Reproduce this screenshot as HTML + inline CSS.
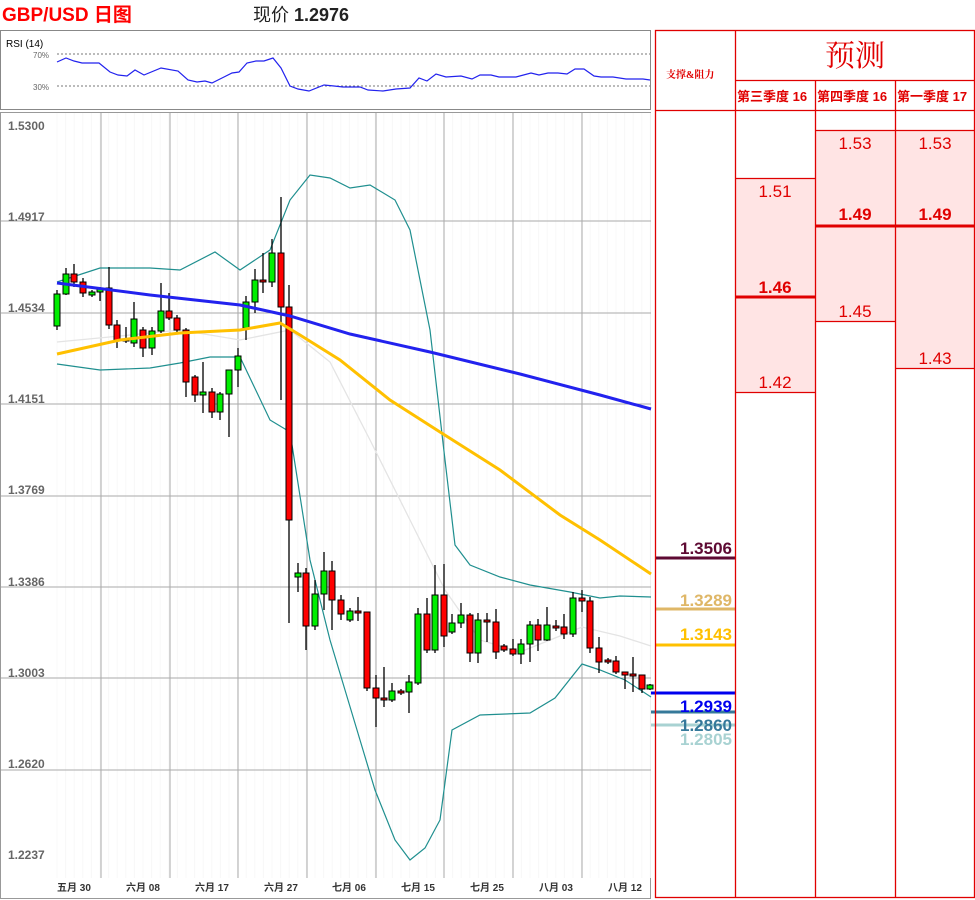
<!DOCTYPE html>
<html><head><meta charset="utf-8"><style>
body{margin:0;width:975px;height:900px;background:#fff;overflow:hidden;font-family:"Liberation Sans","Noto Sans CJK SC",sans-serif}
svg{position:absolute;left:0;top:0}
</style></head><body>
<svg id="s" width="975" height="900" xmlns="http://www.w3.org/2000/svg">
<text x="2" y="21" font-size="19" font-weight="bold" fill="#f00" font-family="Liberation Sans,Noto Sans CJK SC,sans-serif">GBP/USD 日图</text>
<text x="253" y="21" font-size="18" fill="#222" font-family="Liberation Sans,Noto Sans CJK SC,sans-serif">现价 <tspan font-weight="bold">1.2976</tspan></text>
<!-- RSI -->
<rect x="0.5" y="30.5" width="650" height="79" fill="#fff" stroke="#888"/>
<text x="6" y="47" font-size="10" fill="#000">RSI (14)</text>
<line x1="57" y1="54" x2="650" y2="54" stroke="#777" stroke-dasharray="2,2"/>
<line x1="57" y1="86" x2="650" y2="86" stroke="#777" stroke-dasharray="2,2"/>
<text x="33" y="58" font-size="8" fill="#666">70%</text>
<text x="33" y="90" font-size="8" fill="#666">30%</text>
<polyline fill="none" stroke="#2222ee" stroke-width="1.2" points="57,62 66,58 74,61 82,63 99,63 110,72 118,75 127,76 135,70 144,75 161,68 178,71 188,80 197,82 205,81 212,83 224,77 232,73 239,72 247,63 256,61 264,61 273,58 281,68 290,86 298,89 309,91 324,85 334,86 343,87 360,87 368,90 383,91 396,89 410,88 419,78 427,81 436,74 446,77 461,76 472,79 480,75 491,75 499,77 516,77 531,73 539,75 548,73 558,73 567,74 575,69 584,69 594,76 601,77 613,77 626,79 643,79 650,80"/>
<!-- chart frame -->
<rect x="0.5" y="112.5" width="650" height="786" fill="#fff" stroke="#999"/>
<g id="grid" stroke="#aaa" stroke-width="1"></g>
<g font-size="12" font-weight="bold" fill="#666">
<text x="8" y="130">1.5300</text><text x="8" y="221">1.4917</text><text x="8" y="312">1.4534</text><text x="8" y="403">1.4151</text><text x="8" y="494">1.3769</text><text x="8" y="586">1.3386</text><text x="8" y="677">1.3003</text><text x="8" y="768">1.2620</text><text x="8" y="859">1.2237</text>
</g>
<g font-size="10" font-weight="bold" fill="#333" font-family="Liberation Sans,Noto Sans CJK SC,sans-serif">
<text x="57" y="891">五月 30</text><text x="126" y="891">六月 08</text><text x="195" y="891">六月 17</text><text x="264" y="891">六月 27</text><text x="332" y="891">七月 06</text><text x="401" y="891">七月 15</text><text x="470" y="891">七月 25</text><text x="539" y="891">八月 03</text><text x="608" y="891">八月 12</text>
</g>
<polyline fill="none" stroke="#e4e4e4" stroke-width="1.3" points="57,342 120,336 180,330 240,340 290,330 330,362 370,440 410,520 445,590 480,640 520,652 560,636 582,627 620,636 651,646"/>
<polyline fill="none" stroke="#1f8f8f" stroke-width="1.2" points="57,282 100,268 150,268 180,270 215,252 240,270 270,250 290,200 310,175 330,178 350,188 370,185 395,200 410,230 430,330 445,460 455,545 470,565 500,577 530,585 570,592 600,598 620,596 651,597"/>
<polyline fill="none" stroke="#1f8f8f" stroke-width="1.2" points="57,364 100,370 150,368 180,363 210,357 240,357 270,420 290,432 310,560 330,640 345,690 360,740 375,790 395,840 410,860 425,848 440,820 452,730 480,715 530,713 555,698 582,664 600,670 625,680 651,697"/>
<g id="candles"></g>
<polyline fill="none" stroke="#ffc000" stroke-width="3" points="57,354 120,340 180,333 240,330 280,323 300,335 340,360 390,400 440,432 500,470 560,515 600,540 651,574"/>
<polyline fill="none" stroke="#2222ee" stroke-width="3" points="57,283 150,295 240,305 290,316 350,334 430,352 520,374 600,395 651,409"/>
<!-- support lines -->
<g stroke-width="3">
<line x1="655" y1="558" x2="735" y2="558" stroke="#5e0a33"/>
<line x1="655" y1="609" x2="735" y2="609" stroke="#dfb767"/>
<line x1="655" y1="645" x2="735" y2="645" stroke="#ffc000"/>
<line x1="651" y1="693" x2="735" y2="693" stroke="#0000ee"/>
<line x1="651" y1="712" x2="735" y2="712" stroke="#35799a"/>
<line x1="651" y1="725" x2="735" y2="725" stroke="#a8d2d2"/>
</g>
<g font-size="17" font-weight="bold" text-anchor="end">
<text x="732" y="554" fill="#5e0a33">1.3506</text>
<text x="732" y="606" fill="#dfb767">1.3289</text>
<text x="732" y="640" fill="#ffc000">1.3143</text>
<text x="732" y="745" fill="#a8d2d2">1.2805</text>
<text x="732" y="731" fill="#35799a">1.2860</text>
<text x="732" y="712" fill="#0000ee">1.2939</text>
</g>
<!-- table -->
<rect x="735" y="178" width="80" height="214" fill="#ffe4e4"/>
<rect x="815" y="131" width="80" height="190" fill="#ffe4e4"/>
<rect x="895" y="131" width="80" height="237" fill="#ffe4e4"/>
<g stroke="#e00000" stroke-width="1.3" fill="none">
<rect x="655.5" y="30.5" width="319" height="867"/>
<line x1="735.5" y1="30" x2="735.5" y2="898"/>
<line x1="815.5" y1="80" x2="815.5" y2="898"/>
<line x1="895.5" y1="80" x2="895.5" y2="898"/>
<line x1="735" y1="80.5" x2="975" y2="80.5"/>
<line x1="655" y1="110.5" x2="975" y2="110.5"/>
<line x1="815" y1="130.5" x2="975" y2="130.5"/>
<line x1="735" y1="178.5" x2="815" y2="178.5"/>
<line x1="735" y1="392.5" x2="815" y2="392.5"/>
<line x1="815" y1="321.5" x2="895" y2="321.5"/>
<line x1="895" y1="368.5" x2="975" y2="368.5"/>
</g>
<line x1="735" y1="297" x2="815" y2="297" stroke="#e00000" stroke-width="3"/>
<line x1="815" y1="226" x2="975" y2="226" stroke="#e00000" stroke-width="3"/>
<g fill="#e00000" font-family="Liberation Serif,Noto Serif CJK SC,serif" font-weight="bold">
<text x="666" y="78" font-size="10">支撑&amp;阻力</text>
<text x="855" y="66" font-size="30" text-anchor="middle" font-weight="normal">预测</text>
</g>
<g fill="#e00000" font-family="Liberation Sans,Noto Sans CJK SC,sans-serif" font-weight="bold" font-size="13">
<text x="737" y="101">第三季度 16</text>
<text x="817" y="101">第四季度 16</text>
<text x="897" y="101">第一季度 17</text>
</g>
<g fill="#e00000" font-size="17" text-anchor="middle">
<text x="775" y="197">1.51</text><text x="775" y="293" font-weight="bold">1.46</text><text x="775" y="388">1.42</text>
<text x="855" y="149">1.53</text><text x="855" y="220" font-weight="bold">1.49</text><text x="855" y="317">1.45</text>
<text x="935" y="149">1.53</text><text x="935" y="220" font-weight="bold">1.49</text><text x="935" y="364">1.43</text>
</g>
</svg>
<script>
var NS="http://www.w3.org/2000/svg";
function el(p,t,a){var e=document.createElementNS(NS,t);for(var k in a)e.setAttribute(k,a[k]);p.appendChild(e);return e;}
var g=document.getElementById('grid');
for(var x=57;x<651;x+=8.6)el(g,'line',{x1:x,y1:113,x2:x,y2:878,stroke:'#f8f8f8'});
[101,170,238,307,376,444,513,582].forEach(function(x){el(g,'line',{x1:x,y1:113,x2:x,y2:878});});
[221,313,404,496,587,678,770].forEach(function(y){el(g,'line',{x1:1,y1:y,x2:651,y2:y});});
var C=[[57,294,326,290,330,'g'],[66,274,294,268,295,'g'],[74,274,282,264,287,'r'],[83,282,293,278,297,'r'],[92,292,295,290,297,'g'],[100,289,292,287,301,'g'],[109,288,325,267,329,'r'],[117,325,340,320,348,'r'],[126,339,341,327,343,'r'],[134,319,343,302,347,'g'],[143,330,348,327,357,'r'],[152,331,348,327,355,'g'],[161,311,331,283,333,'g'],[169,311,318,293,320,'r'],[177,318,330,315,333,'r'],[186,330,382,328,397,'r'],[195,377,395,375,402,'r'],[203,392,395,362,413,'g'],[212,392,412,388,418,'r'],[220,394,412,392,420,'g'],[229,370,394,370,437,'g'],[238,356,370,348,387,'g'],[246,302,328,296,340,'g'],[255,280,302,269,313,'g'],[263,280,282,253,293,'r'],[272,253,282,239,287,'g'],[281,253,307,197,400,'r'],[289,307,520,285,623,'r'],[298,573,577,563,592,'g'],[306,573,626,568,650,'r'],[315,594,626,580,630,'g'],[324,571,594,552,610,'g'],[332,571,600,561,630,'r'],[341,600,614,595,620,'r'],[350,611,620,608,622,'g'],[358,611,613,597,621,'r'],[367,612,688,612,691,'r'],[376,688,698,675,727,'r'],[384,698,700,667,707,'r'],[392,691,700,683,702,'g'],[401,691,693,689,695,'r'],[409,682,692,675,713,'g'],[418,614,683,608,685,'g'],[427,614,650,598,653,'r'],[435,595,650,565,653,'g'],[444,595,636,564,647,'r'],[452,623,632,614,634,'g'],[461,615,623,603,628,'g'],[470,615,653,613,662,'r'],[478,620,653,613,663,'g'],[487,620,622,613,642,'r'],[496,622,652,609,659,'r'],[504,646,650,644,652,'r'],[513,649,654,639,656,'r'],[521,644,654,639,664,'g'],[530,625,644,621,662,'g'],[538,625,640,619,651,'r'],[547,625,640,607,641,'g'],[556,626,628,620,631,'r'],[564,627,634,614,639,'r'],[573,598,634,592,637,'g'],[582,598,601,590,612,'r'],[590,601,648,597,653,'r'],[599,648,662,637,673,'r'],[608,660,662,658,664,'r'],[616,661,672,656,674,'r'],[625,672,675,672,689,'r'],[633,674,676,657,692,'r'],[642,675,689,675,693,'r'],[650,685,689,684,690,'g']];
var cg=document.getElementById('candles');
C.forEach(function(c){
 el(cg,'line',{x1:c[0],y1:c[3],x2:c[0],y2:c[4],stroke:'#000','stroke-width':1.3});
 var h=Math.max(c[2]-c[1],2);
 el(cg,'rect',{x:c[0]-3,y:c[1],width:6,height:h,fill:c[5]=='g'?'#00ee00':'#ff0000',stroke:'#000','stroke-width':1});
});
</script>
</body></html>
